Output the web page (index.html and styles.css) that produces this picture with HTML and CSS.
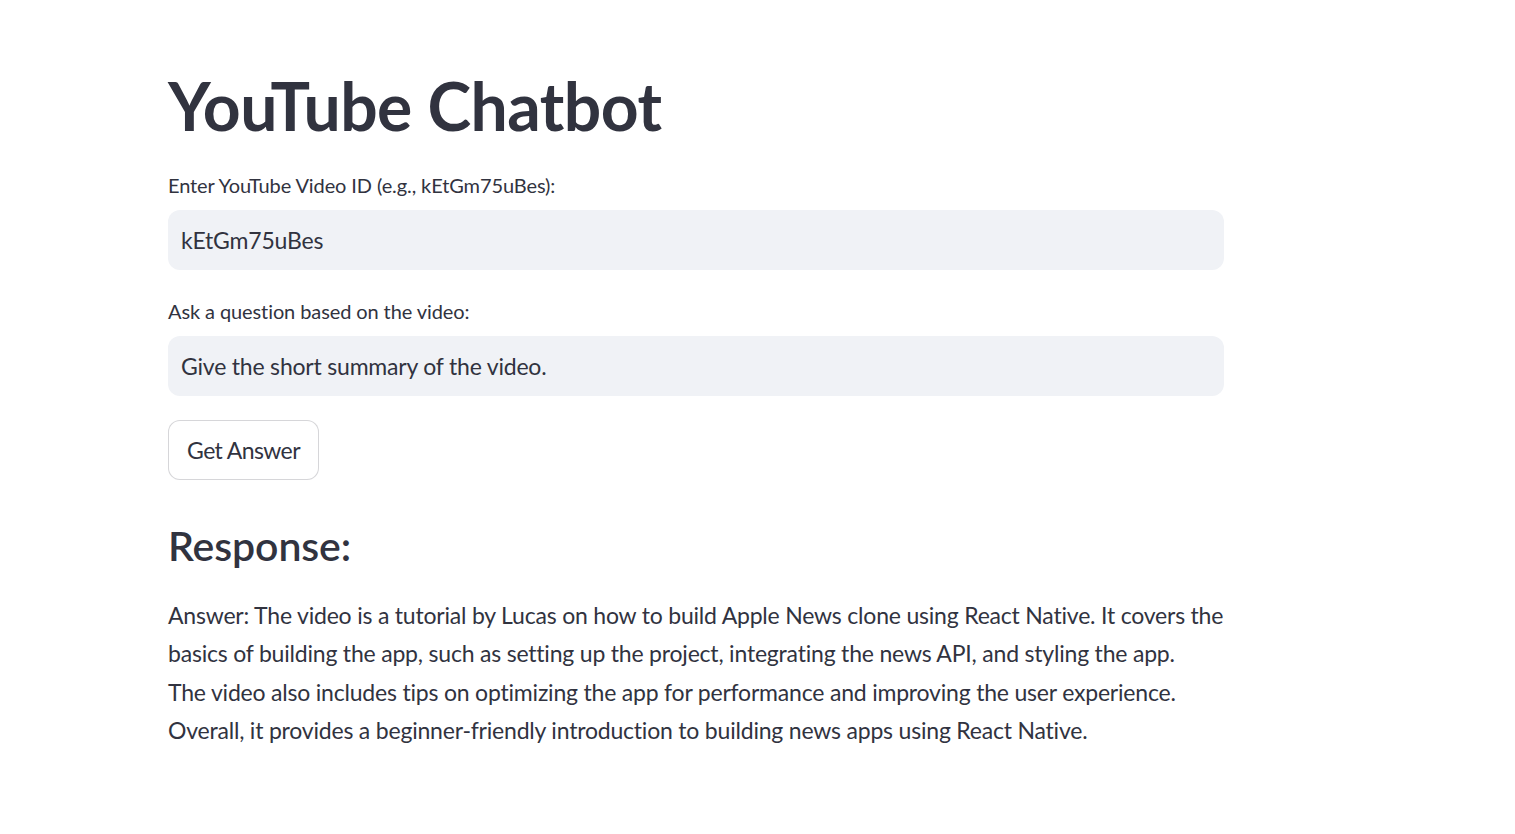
FILE: index.html
```html
<!DOCTYPE html>
<html lang="en">
<head>
<meta charset="utf-8">
<title>YouTube Chatbot</title>
<link rel="stylesheet" href="styles.css">
</head>
<body>
<main class="app">
  <div class="block">
    <h1 class="title">YouTube Chatbot</h1>
    <div class="field">
      <label class="label" for="vid">Enter YouTube Video ID (e.g., kEtGm75uBes):</label>
      <div class="input-wrap"><input id="vid" class="input" type="text" value="kEtGm75uBes"></div>
    </div>
    <div class="field">
      <label class="label" for="q">Ask a question based on the video:</label>
      <div class="input-wrap"><input id="q" class="input" type="text" value="Give the short summary of the video."></div>
    </div>
    <div class="btn-row"><button class="btn" type="button">Get Answer</button></div>
    <h3 class="subhead">Response:</h3>
    <p class="answer"><span class="line">Answer: The video is a tutorial by Lucas on how to build Apple News clone using React Native. It covers the</span><span class="line">basics of building the app, such as setting up the project, integrating the news API, and styling the app.</span><span class="line">The video also includes tips on optimizing the app for performance and improving the user experience.</span><span class="line">Overall, it provides a beginner-friendly introduction to building news apps using React Native.</span></p>
  </div>
</main>
</body>
</html>
```
FILE: styles.css
```css
* { box-sizing: border-box; }
html, body { margin: 0; padding: 0; background: #ffffff; }
body {
  font-family: Lato, "Open Sans", "Noto Sans", sans-serif;
  color: #31333f;
  width: 1515px;
  height: 834px;
  overflow: hidden;
}
.app { display: flex; justify-content: flex-start; padding: 60px 0 0 168px; }
.block { width: 1056px; display: flex; flex-direction: column; }
.title {
  margin: 0;
  font-size: 66px;
  font-weight: 700;
  line-height: 92px;
  letter-spacing: -0.5px;
}
.field { display: flex; flex-direction: column; margin-top: 19px; }
.field + .field { margin-top: 27px; }
.label {
  font-size: 20px;
  letter-spacing: -0.1px;
  line-height: 28px;
  height: 28px;
  margin-bottom: 11px;
}
.input-wrap {
  background: #f0f2f6;
  border-radius: 12px;
  height: 60px;
  display: flex;
  align-items: center;
}
.input {
  border: none;
  background: transparent;
  font-family: inherit;
  color: #31333f;
  font-size: 23px;
  letter-spacing: -0.2px;
  width: 100%;
  padding: 0 13px;
  outline: none;
}
.btn-row { margin-top: 24px; }
.btn {
  font-family: inherit;
  font-size: 23px;
  letter-spacing: -0.6px;
  color: #31333f;
  background: #ffffff;
  border: 1px solid rgba(49, 51, 63, 0.2);
  border-radius: 12px;
  height: 60px;
  width: 151px;
  padding: 0;
}
.subhead {
  margin: 38px 0 0;
  font-size: 41px;
  font-weight: 600;
  letter-spacing: -0.1px;
  line-height: 56px;
}
.answer {
  margin: 22px 0 0;
  font-size: 23px;
  letter-spacing: -0.2px;
  line-height: 38.4px;
}
.line { display: block; white-space: nowrap; }
```
